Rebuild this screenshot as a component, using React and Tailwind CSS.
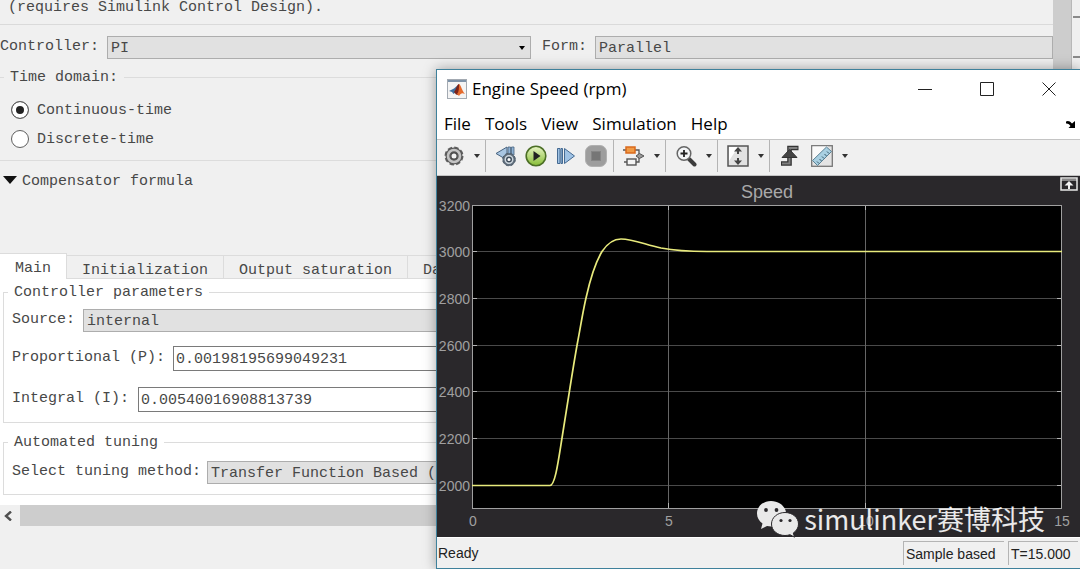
import { useState } from "react";
import clsx from "clsx";

const tabs = ["Main", "Initialization", "Output saturation", "Data Types"];
const menus = ["File", "Tools", "View", "Simulation", "Help"];

// signal samples in chart units
const curve =
  "M35 309.5H113C118 309.5 121 287 125 262L132 218C135 199 138 180 141 164C144 148 146 135 149 122C153 104 158 87 165 75.5C171 66.5 177 63 184 63C196 63 208 68.5 224 72C240 75 254 75.5 270 75.5H625";

const yTicks = [
  { label: "3200", y: 29 },
  { label: "3000", y: 75 },
  { label: "2800", y: 122 },
  { label: "2600", y: 169 },
  { label: "2400", y: 215 },
  { label: "2200", y: 262 },
  { label: "2000", y: 309 },
];
const xTicks = [
  { label: "0", x: 35 },
  { label: "5", x: 231 },
  { label: "10", x: 428 },
  { label: "15", x: 624 },
];

function SelectBox({ id, options, arrow, className }) {
  return (
    <div className={clsx("relative", className)}>
      <select
        id={id}
        className="block h-[23px] w-full appearance-none border border-[#adadad] bg-[#e1e1e1] px-[3px] pt-0.5 leading-5 outline-none"
      >
        {options.map((o) => (
          <option key={o}>{o}</option>
        ))}
      </select>
      {arrow && (
        <svg viewBox="0 0 6 4" className="pointer-events-none absolute top-2.5 right-1.5 h-1 w-1.5">
          <path d="M0 0h6L3 4z" fill="#000" />
        </svg>
      )}
    </div>
  );
}

function Group({ title, className, children }) {
  return (
    <fieldset className={clsx("min-w-0 border border-[#dcdcdc]", className)}>
      <legend className="px-1.5 pt-0.5 leading-5">{title}</legend>
      {children}
    </fieldset>
  );
}

function TunerDialog() {
  const [domain, setDomain] = useState("Continuous-time");
  const [tab, setTab] = useState("Main");

  return (
    <div className="flex h-full bg-[#f0f0f0] font-['Liberation_Mono','Noto_Sans_CJK_SC',monospace] text-[15px] text-[#484848]">
      <div className="flex min-w-0 flex-1 flex-col">
        <p className="h-[25px] border-b border-[#dadada] pl-2 leading-4">
          (requires Simulink Control Design).
        </p>

        <div className="mt-[11px] flex items-center">
          <label htmlFor="controller" className="w-[107px]">Controller:</label>
          <SelectBox id="controller" options={["PI", "PID", "P"]} arrow className="w-[424px]" />
          <label htmlFor="form" className="ml-[11px] w-[53px] whitespace-nowrap">Form:</label>
          <SelectBox id="form" options={["Parallel", "Ideal"]} className="flex-1" />
        </div>

        <Group title="Time domain:" className="mt-[7px] h-[95px] border-l-0 pl-1">
          <div className="flex flex-col gap-[7px] pt-[11px] pl-[7px]">
            {["Continuous-time", "Discrete-time"].map((name) => (
              <label key={name} className="flex items-center gap-2 leading-5">
                <input
                  type="radio"
                  name="domain"
                  checked={domain === name}
                  onChange={() => setDomain(name)}
                  className="size-[18px] appearance-none rounded-full border border-[#606060] bg-white checked:bg-[#222] checked:shadow-[inset_0_0_0_4px_white]"
                />
                <span className="pt-0.5">{name}</span>
              </label>
            ))}
          </div>
        </Group>

        <button className="mt-[11px] flex items-center gap-[5px] pl-[3px] leading-5">
          <svg viewBox="0 0 14 8" className="mb-1 h-2 w-3.5">
            <path d="M0 0h14L7 8z" fill="#111" />
          </svg>
          Compensator formula
        </button>

        <div role="tablist" className="mt-[62px] flex h-[25px] items-end border-b border-[#dcdcdc]">
          {tabs.map((t) => (
            <button
              key={t}
              role="tab"
              aria-selected={tab === t}
              onClick={() => setTab(t)}
              className={clsx(
                "border-t border-r border-[#dcdcdc] px-[15px]",
                tab === t ? "-mb-px h-[26px] bg-white pt-1" : "h-[23px] pt-1"
              )}
            >
              {t}
            </button>
          ))}
        </div>

        <div className="flex h-[226px] flex-col bg-white pt-0.5 pl-[3px]">
          <Group title="Controller parameters" className="h-[142px] pl-1">
            <div className="flex items-center pt-1.5 pl-1">
              <label htmlFor="source" className="w-[71px]">Source:</label>
              <SelectBox id="source" options={["internal", "external"]} className="flex-1" />
            </div>
            <div className="mt-3.5 flex items-center pl-1">
              <label htmlFor="p" className="w-[161px]">Proportional (P):</label>
              <input
                id="p"
                defaultValue="0.00198195699049231"
                className="h-[25px] min-w-0 flex-1 border border-[#7a7a7a] bg-white px-0.5 pt-0.5 outline-none"
              />
            </div>
            <div className="mt-4 flex items-center pl-1">
              <label htmlFor="i" className="w-[126px]">Integral (I):</label>
              <input
                id="i"
                defaultValue="0.00540016908813739"
                className="h-[25px] min-w-0 flex-1 border border-[#7a7a7a] bg-white px-0.5 pt-0.5 outline-none"
              />
            </div>
          </Group>
          <Group title="Automated tuning" className="mt-2 h-16 pl-1">
            <div className="flex items-center pt-2 pl-1">
              <label htmlFor="method" className="w-[195px]">Select tuning method:</label>
              <SelectBox
                id="method"
                options={["Transfer Function Based (PID Tuner App)", "Frequency Response Based"]}
                className="flex-1"
              />
            </div>
          </Group>
        </div>

        <div className="flex h-[21px]">
          <button aria-label="Scroll left" className="flex w-5 items-center justify-center pr-1">
            <svg viewBox="0 0 8 10" className="h-2.5 w-2" fill="none" stroke="#505050" strokeWidth="2.4">
              <path d="M7 0.5L2 5l5 4.5" />
            </svg>
          </button>
          <div className="flex-1 bg-[#cdcdcd]" />
        </div>
      </div>

      <div className="w-[18px] bg-[#cdcdcd]" />
      <div className="flex w-[9px] flex-col border-l border-[#b8b8b8] pl-px">
        <div className="h-[18px] border-b-2 border-[#8a8a8a]" />
        <div className="h-10 border-b-2 border-[#8a8a8a]" />
      </div>
    </div>
  );
}

function MatlabLogo() {
  return (
    <svg viewBox="0 0 20 20" className="size-5">
      <rect x="0.5" y="0.5" width="19" height="19" fill="#f4f4f4" stroke="#a3aab2" />
      <path d="M1 1h18v2H1z" fill="#7d92a8" />
      <path d="M2 12l5-2.5L11 6 9 13l-2.5 2L5 13z" fill="#3f6f9f" />
      <path d="M7 13c2-2 3-8 5-8l1 5-2 6-2-.5z" fill="#7c2318" />
      <path d="M12 5c2 1 3 7 6 10-3-1.500-4-1-6 2l-2-2c2-2 2-6 2-10z" fill="#e56b2d" />
    </svg>
  );
}

function GearIcon() {
  return (
    <svg viewBox="0 0 22 22" className="size-[22px]" fill="none">
      <circle cx="11" cy="11" r="8.5" stroke="#5f5f5f" strokeWidth="2" strokeDasharray="4.450 2.225" />
      <circle cx="11" cy="11" r="6" stroke="#5a5a5a" strokeWidth="5" />
      <circle cx="11" cy="11" r="6" stroke="#c4c4c4" strokeWidth="2.6" />
      <circle cx="11" cy="11" r="3.2" fill="#f2f2f2" stroke="#4a4a4a" strokeWidth="1.4" />
    </svg>
  );
}

function StepBackIcon() {
  return (
    <svg viewBox="0 0 22 22" className="size-[22px]">
      <path d="M1 8.5L12 2v13z" fill="#a9c6e2" stroke="#46627f" />
      <path d="M13 2h2.500v8H13zM16.500 2h2.500v8h-2.500z" fill="#8fb2d5" stroke="#46627f" strokeWidth="0.8" />
      <circle cx="14" cy="14.500" r="5.500" fill="#cdd6de" stroke="#5e6c7a" strokeWidth="2" />
      <circle cx="14" cy="14.500" r="6.300" fill="none" stroke="#52606e" strokeDasharray="3 2" />
      <circle cx="14" cy="14.500" r="2.300" fill="#fff" stroke="#3f4d5b" strokeWidth="1.4" />
    </svg>
  );
}

function RunIcon() {
  return (
    <svg viewBox="0 0 22 22" className="size-[22px]">
      <defs>
        <linearGradient id="run" x1="0" y1="0" x2="0" y2="1">
          <stop offset="0" stopColor="#e9f5c6" />
          <stop offset="1" stopColor="#86bd35" />
        </linearGradient>
      </defs>
      <circle cx="11" cy="11" r="9.8" fill="url(#run)" stroke="#4c6f26" strokeWidth="1.6" />
      <path d="M8.500 6l7 5-7 5z" fill="#222" />
    </svg>
  );
}

function StepIcon() {
  return (
    <svg viewBox="0 0 22 22" className="size-[22px]" fill="#9fc2e4" stroke="#456a92">
      <path d="M2.500 3.500H5v15H2.500zM9.500 3.500l10 7.500-10 7.500z" />
      <path d="M6 3.500h1.500v15H6z" />
    </svg>
  );
}

function StopIcon() {
  return (
    <svg viewBox="0 0 22 22" className="size-[22px]">
      <rect x="0.5" y="0.5" width="21" height="21" rx="6.5" fill="#9d9d9d" stroke="#b0b0b0" />
      <rect x="6.5" y="6.5" width="9" height="9" fill="#767676" stroke="#868686" />
    </svg>
  );
}

function ModelIcon() {
  return (
    <svg viewBox="0 0 22 22" className="size-[22px]" fill="none" stroke="#555">
      <path d="M0 5h3M12 5h4v5M1 17h3M13 17h3v-5" strokeWidth="1.3" />
      <rect x="3" y="2" width="9" height="6" fill="#f09a45" stroke="#d9691c" strokeWidth="1.5" />
      <rect x="4" y="14" width="9" height="6" fill="#f4f4f4" strokeWidth="1.4" />
      <path d="M13 11l3.500-2.500L21 11l-4.500 2.500z" fill="#999" />
    </svg>
  );
}

function ZoomIcon() {
  return (
    <svg viewBox="0 0 22 22" className="size-[22px]" fill="none">
      <path d="M14 14l5.500 5.500" stroke="#3c3c3c" strokeWidth="4" strokeLinecap="round" />
      <circle cx="9" cy="8.5" r="6.8" fill="#f3f5f7" stroke="#666" strokeWidth="1.5" />
      <path d="M9 5v7M5.500 8.500h7" stroke="#222" strokeWidth="1.8" />
    </svg>
  );
}

function FitIcon() {
  return (
    <svg viewBox="0 0 22 22" className="size-[22px]">
      <rect x="1" y="1" width="20" height="20" fill="#e2e2e2" stroke="#555" strokeWidth="1.5" />
      <path d="M2 2h9L2 16z" fill="#fff" />
      <path d="M11 2l4 4.500h-3V9h-2V6.500H7zM11 20l4-4.500h-3V13h-2v2.500H7z" fill="#444" />
    </svg>
  );
}

function TriggerIcon() {
  return (
    <svg viewBox="0 0 22 22" className="size-[22px]" fill="none">
      <path d="M2 18.500h8.500V3h9" stroke="#333" strokeWidth="4.6" />
      <path d="M3 18.500h7.500V3H18.500" stroke="#808080" strokeWidth="2" />
      <path d="M3 12.500L10.500 4.500l7.500 8z" fill="#444" stroke="#333" />
    </svg>
  );
}

function RulerIcon() {
  return (
    <svg viewBox="0 0 22 22" className="size-[22px]">
      <rect x="0.7" y="0.7" width="20.6" height="20.6" fill="#e4e4e4" stroke="#777" strokeWidth="1.3" />
      <path d="M1.500 1.500h16l-16 15z" fill="#fafafa" />
      <path d="M1.500 15.500L15.500 2l5 4.500L6.500 20.500z" fill="#a9d0e2" stroke="#5c8295" />
      <path d="M8 18.500l-2-2M10.500 16l-2-2M13 13.500l-2-2M15.500 11l-2-2M18 8.500l-2-2" stroke="#37596b" />
    </svg>
  );
}

function ToolButton({ label, children }) {
  return (
    <button aria-label={label} className="flex w-[30px] shrink-0 items-center justify-center">
      {children}
    </button>
  );
}

function Caret({ label }) {
  return (
    <button aria-label={label} className="flex w-3.5 shrink-0 items-center justify-end pr-[3px]">
      <svg viewBox="0 0 6 4" className="h-1 w-1.5">
        <path d="M0 0h6L3 4z" fill="#333" />
      </svg>
    </button>
  );
}

function Separator() {
  return <div className="mr-[5px] ml-0.5 h-8 w-px shrink-0 bg-[#b4b4b4]" />;
}

function Toolbar() {
  return (
    <div className="flex h-[37px] items-center border-y border-[#c4c4c4] bg-[#f0f0f0] pb-1 pl-0.5">
      <ToolButton label="Configuration"><GearIcon /></ToolButton>
      <Caret label="Configuration options" />
      <Separator />
      <ToolButton label="Step back"><StepBackIcon /></ToolButton>
      <ToolButton label="Run"><RunIcon /></ToolButton>
      <ToolButton label="Step forward"><StepIcon /></ToolButton>
      <ToolButton label="Stop"><StopIcon /></ToolButton>
      <Separator />
      <ToolButton label="Highlight block"><ModelIcon /></ToolButton>
      <Caret label="Highlight options" />
      <Separator />
      <ToolButton label="Zoom"><ZoomIcon /></ToolButton>
      <Caret label="Zoom options" />
      <Separator />
      <ToolButton label="Scale axes"><FitIcon /></ToolButton>
      <Caret label="Scale options" />
      <Separator />
      <div className="flex gap-0.5">
        <ToolButton label="Triggers"><TriggerIcon /></ToolButton>
        <ToolButton label="Measurements"><RulerIcon /></ToolButton>
      </div>
      <Caret label="Measurement options" />
    </div>
  );
}

function Chart() {
  return (
    <svg
      viewBox="0 0 643 361"
      className="block h-full w-full font-['Liberation_Sans',Arial,sans-serif]"
    >
      <rect x="35" y="29" width="590" height="303" fill="#000" />
      <g stroke="#4a4a4a">
        {yTicks.slice(1).map((t) => (
          <path key={t.label} d={`M35 ${t.y + 0.5}H625`} />
        ))}
        {xTicks.slice(1, 3).map((t) => (
          <path key={t.label} d={`M${t.x + 0.5} 29V332`} stroke="#666" />
        ))}
      </g>
      <g stroke="#b5b5b5">
        {yTicks.slice(1).map((t) => (
          <path key={t.label} d={`M35 ${t.y + 0.5}h5M625 ${t.y + 0.5}h-5`} />
        ))}
        {xTicks.slice(1, 3).map((t) => (
          <path key={t.label} d={`M${t.x + 0.5} 29v5M${t.x + 0.5} 332v-5`} />
        ))}
      </g>
      <rect x="35.5" y="29.5" width="589" height="303" fill="none" stroke="#a0a0a0" />
      <path d={curve} fill="none" stroke="#e8ea7c" strokeWidth="1.7" />

      <g fill="#a0a0a0" fontSize="14">
        {yTicks.map((t) => (
          <text key={t.label} x="33" y={t.y + 6} textAnchor="end">{t.label}</text>
        ))}
        {xTicks.map((t) => (
          <text key={t.label} x={t.x + 1} y="350" textAnchor="middle">{t.label}</text>
        ))}
      </g>
      <text x="330" y="22" textAnchor="middle" fill="#a9a9a9" fontSize="18">Speed</text>

      {/* maximize axes */}
      <g>
        <rect x="624" y="2" width="16" height="12" fill="#2a282b" stroke="#e8e8e8" strokeWidth="1.5" />
        <path d="M624 4h16" stroke="#e8e8e8" />
        <path d="M632 5l4.500 4.500H633V13h-2V9.500h-3.500z" fill="#f2f2f2" />
      </g>
    </svg>
  );
}

function Watermark() {
  return (
    <div className="absolute right-[35px] bottom-[30px] flex items-center gap-1 text-white/90">
      <svg viewBox="0 0 44 38" className="h-[38px] w-11">
        <path
          d="M15 1C7 1 1 6.500 1 13.500c0 4 2 7.500 5.500 10L5 29l6-3c8 2 19-2 19-12.500C30 6.500 23 1 15 1z"
          fill="#e9e9e9"
        />
        <circle cx="10" cy="10" r="1.9" fill="#2a282b" />
        <circle cx="20.5" cy="10" r="1.9" fill="#2a282b" />
        <path
          d="M29 12.500c-7.500 0-13.500 5-13.500 11.500S21.500 35.500 29 35.500c1.800 0 3.400-.3 5-.8l4.500 2.500-1.200-4.200c3.300-2.200 5.200-5.400 5.200-9 0-6.500-6-11.500-13.500-11.500z"
          fill="#e9e9e9"
          stroke="#2a282b"
        />
        <circle cx="25" cy="20.5" r="1.6" fill="#2a282b" />
        <circle cx="34" cy="20.5" r="1.6" fill="#2a282b" />
      </svg>
      <span className="font-['Noto_Sans_CJK_SC',sans-serif] text-[27px] leading-9 whitespace-nowrap">
        simulinker赛博科技
      </span>
    </div>
  );
}

function ScopeWindow() {
  return (
    <section className="absolute top-[69px] right-0 bottom-0 left-[436px] flex flex-col border border-r-0 border-[#3f819b] bg-white shadow-[0_0_12px_rgba(0,0,0,0.35)]">
      <header className="flex h-[38px] shrink-0 items-center pl-2.5 font-['Open_Sans','Noto_Sans',sans-serif] text-black">
        <MatlabLogo />
        <h1 className="ml-[5px] flex-1 text-[17px]">Engine Speed (rpm)</h1>
        <div className="flex">
          <button aria-label="Minimize" className="flex w-[62px] items-center justify-center">
            <svg viewBox="0 0 14 14" className="size-3.5"><path d="M0 7.500h14" stroke="#222" /></svg>
          </button>
          <button aria-label="Maximize" className="flex w-[62px] items-center justify-center">
            <svg viewBox="0 0 14 14" className="size-3.5"><path d="M.5.5h13v13H.5z" fill="none" stroke="#222" /></svg>
          </button>
          <button aria-label="Close" className="flex w-[62px] items-center justify-center">
            <svg viewBox="0 0 14 14" className="size-3.5"><path d="M.5.5l13 13M13.500.5l-13 13" stroke="#222" /></svg>
          </button>
        </div>
      </header>

      <nav className="flex h-[31px] shrink-0 items-center gap-3.5 pl-[7px] font-['Open_Sans','Noto_Sans',sans-serif] text-[17px] text-black">
        {menus.map((m) => (
          <button key={m}>{m}</button>
        ))}
        <button aria-label="Undock" className="mr-1 ml-auto">
          <svg viewBox="0 0 10 8" className="h-2 w-2.5">
            <path d="M0 1.500Q3 0 6 3.500L9 1V8H2.500l2-2Q3 3 0 3.500z" fill="#000" />
          </svg>
        </button>
      </nav>

      <Toolbar />

      <div className="min-h-0 flex-1 bg-[#2a282b]">
        <Chart />
      </div>

      <footer className="flex h-[31px] shrink-0 items-center border-t border-white bg-[#f0f0f0] pr-0.5 font-['Liberation_Sans',Arial,sans-serif] text-sm text-[#222]">
        <span className="flex-1 pl-px">Ready</span>
        <span className="mr-1 h-6 w-[101px] border-t border-l border-[#b4b4b4] pl-0.5 leading-6">Sample based</span>
        <span className="h-6 w-[70px] border-t border-l border-[#b4b4b4] pl-0.5 leading-6">T=15.000</span>
      </footer>

      <Watermark />
    </section>
  );
}

export default function App() {
  return (
    <main className="relative h-screen overflow-hidden">
      <TunerDialog />
      <ScopeWindow />
    </main>
  );
}
